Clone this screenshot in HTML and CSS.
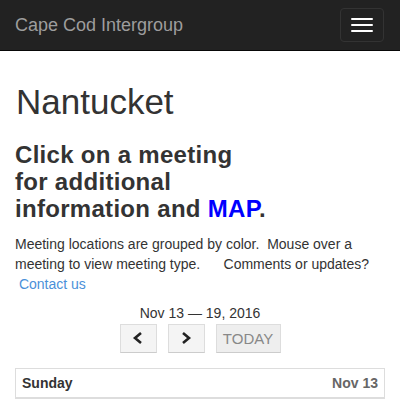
FILE: index.html
```html
<!DOCTYPE html>
<html>
<head>
<meta charset="utf-8">
<link rel="stylesheet" href="styles.css">
</head>
<body>
<nav class="navbar">
  <span class="brand">Cape Cod Intergroup</span>
  <button class="toggle" aria-label="menu">
    <span class="bar"></span><span class="bar"></span><span class="bar"></span>
  </button>
</nav>
<main class="container">
  <h1 class="title">Nantucket</h1>
  <h3 class="lead">Click on a meeting<br>for additional<br>information and <span class="map">MAP</span>.</h3>
  <p class="info">Meeting locations are grouped by color.&nbsp; Mouse over a meeting to view meeting type.&nbsp;&nbsp;&nbsp;&nbsp;&nbsp; Comments or updates?<br>&nbsp;<a class="link" href="#">Contact us</a></p>
  <div class="toolbar">
    <div class="range">Nov 13 — 19, 2016</div>
    <div class="buttons">
      <button class="btn"><svg width="12" height="14" viewBox="0 0 12 14"><polyline points="9,2 3,7 9,12" fill="none" stroke="#222" stroke-width="2.6"/></svg></button>
      <button class="btn"><svg width="12" height="14" viewBox="0 0 12 14"><polyline points="3,2 9,7 3,12" fill="none" stroke="#222" stroke-width="2.6"/></svg></button>
      <button class="btn today">TODAY</button>
    </div>
  </div>
  <div class="day">
    <div class="day-head"><span class="day-name">Sunday</span><span class="day-date">Nov 13</span></div>
  </div>
</main>
</body>
</html>
```
FILE: styles.css
```css
html, body { margin: 0; padding: 0; }
body {
  font-family: "Liberation Sans", Arial, sans-serif;
  font-size: 14px;
  line-height: 20px;
  color: #333;
  background: #fff;
}
.navbar {
  height: 50px;
  background: #222;
  border-bottom: 1px solid #080808;
  display: flex;
  align-items: center;
  justify-content: space-between;
  padding: 0 15px;
}
.brand {
  color: #9d9d9d;
  font-size: 18px;
  line-height: 20px;
}
.toggle {
  width: 44px;
  height: 34px;
  margin-right: 1px;
  background: transparent;
  border: 1px solid #333;
  border-radius: 4px;
  display: flex;
  flex-direction: column;
  align-items: center;
  justify-content: center;
  gap: 4px;
  padding: 0;
}
.bar {
  display: block;
  width: 22px;
  height: 2px;
  background: #fff;
  border-radius: 1px;
}
.container { padding: 0 15px; }
.title {
  font-size: 35px;
  font-weight: 500;
  line-height: 39.6px;
  margin: 31px 0 0 1px;
}
.lead {
  font-size: 24px;
  font-weight: bold;
  line-height: 27px;
  letter-spacing: 0.3px;
  margin: 19px 0 12px;
}
.map { color: #0000ff; }
.info { margin: 0 0 9px; }
.link { color: #4a90d9; text-decoration: none; }
.toolbar {
  display: flex;
  flex-direction: column;
  align-items: center;
}
.range { line-height: 20px; }
.buttons {
  display: flex;
  gap: 11px;
  margin-top: 1px;
}
.btn {
  height: 29px;
  width: 37px;
  padding: 0;
  border: 1px solid #ddd;
  border-bottom-color: #ccc;
  background: #f4f4f4;
  border-radius: 0;
  display: flex;
  align-items: center;
  justify-content: center;
}
.today {
  width: 65px;
  background: #eee;
  color: #888;
  font-family: "Liberation Sans", Arial, sans-serif;
  font-size: 15px;
}
.day {
  margin-top: 15px;
  border: 1px solid #ddd;
}
.day-head {
  display: flex;
  justify-content: space-between;
  padding: 4px 6px 4px 6px;
  border-bottom: 1px solid #ddd;
  font-weight: bold;
  height: 20px;
}
.day-date { color: #666; }
```
